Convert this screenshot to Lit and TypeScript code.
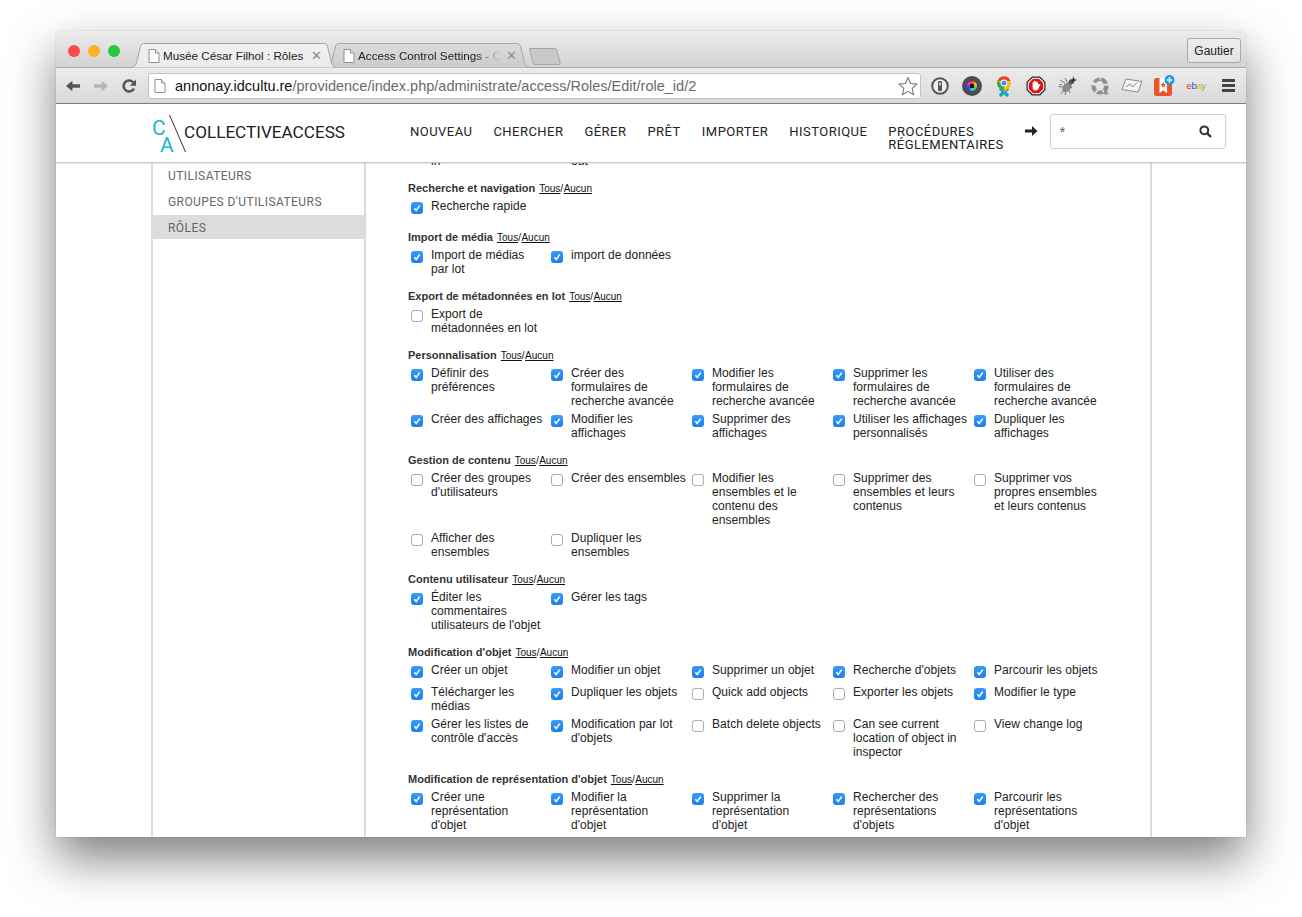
import { LitElement, html, css } from "lit";
import { customElement } from "lit/decorators.js";

type Item = [string, boolean];
interface Section { title: string; items: Item[] }

const on = (...l: string[]): Item[] => l.map((s) => [s, true]);
const off = (...l: string[]): Item[] => l.map((s) => [s, false]);

const SECTIONS: Section[] = [
  { title: "Recherche et navigation", items: on("Recherche rapide") },
  { title: "Import de média", items: on("Import de médias\npar lot", "import de données") },
  { title: "Export de métadonnées en lot", items: off("Export de\nmétadonnées en lot") },
  {
    title: "Personnalisation",
    items: on(
      "Définir des\npréférences",
      "Créer des\nformulaires de\nrecherche avancée",
      "Modifier les\nformulaires de\nrecherche avancée",
      "Supprimer les\nformulaires de\nrecherche avancée",
      "Utiliser des\nformulaires de\nrecherche avancée",
      "Créer des affichages",
      "Modifier les\naffichages",
      "Supprimer des\naffichages",
      "Utiliser les affichages\npersonnalisés",
      "Dupliquer les\naffichages"
    ),
  },
  {
    title: "Gestion de contenu",
    items: off(
      "Créer des groupes\nd'utilisateurs",
      "Créer des ensembles",
      "Modifier les\nensembles et le\ncontenu des\nensembles",
      "Supprimer des\nensembles et leurs\ncontenus",
      "Supprimer vos\npropres ensembles\net leurs contenus",
      "Afficher des\nensembles",
      "Dupliquer les\nensembles"
    ),
  },
  {
    title: "Contenu utilisateur",
    items: on("Éditer les\ncommentaires\nutilisateurs de l'objet", "Gérer les tags"),
  },
  {
    title: "Modification d'objet",
    items: [
      ...on("Créer un objet", "Modifier un objet", "Supprimer un objet", "Recherche d'objets", "Parcourir les objets", "Télécharger les\nmédias", "Dupliquer les objets"),
      ...off("Quick add objects", "Exporter les objets"),
      ...on("Modifier le type", "Gérer les listes de\ncontrôle d'accès", "Modification par lot\nd'objets"),
      ...off("Batch delete objects", "Can see current\nlocation of object in\ninspector", "View change log"),
    ],
  },
  {
    title: "Modification de représentation d'objet",
    items: on(
      "Créer une\nreprésentation\nd'objet",
      "Modifier la\nreprésentation\nd'objet",
      "Supprimer la\nreprésentation\nd'objet",
      "Rechercher des\nreprésentations\nd'objets",
      "Parcourir les\nreprésentations\nd'objet"
    ),
  },
];

const NAV = ["Nouveau", "Chercher", "Gérer", "Prêt", "Importer", "Historique"];
const SIDE = ["Utilisateurs", "Groupes d'utilisateurs", "Rôles"];

const pageIcon = html`<svg class="page" width="12" height="14" viewBox="0 0 12 14"><path d="M1 .5h6.5L11 4v9.500H1z" fill="#fff" stroke="#8f8f8f"/><path d="M7.500.5V4H11" fill="#eee" stroke="#8f8f8f"/></svg>`;

const tabPath = "M0 24.500C3 24.500 4.500 23 5.500 20L9.500 3.500C10 1 11.500 .5 14 .5H192C194.500 .5 196 1 196.500 3.500L200.500 20C201.500 23 203 24.500 206 24.500";

@customElement("app-root")
export class AppRoot extends LitElement {
  static styles = css`
    :host { display: block; width: 1302px; height: 917px; background: #fff; overflow: hidden; font-family: "Liberation Sans", Arial, sans-serif; }
    .shell { padding: 31px 56px 0; }
    .window { position: relative; width: 1190px; height: 806px; border-radius: 5px 5px 0 0; overflow: hidden; background: #fff; display: flex; flex-direction: column; }
    .shadow { border-radius: 5px 5px 0 0; box-shadow: 0 22px 48px rgba(0,0,0,.5), 0 0 1px rgba(0,0,0,.45); width: 1190px; height: 806px; }

    .titlebar { height: 37px; flex: none; box-sizing: border-box; padding: 12px 5px 0 75px; display: flex; align-items: flex-start; background: linear-gradient(#ececec, #d3d3d3); border-bottom: 1px solid #a9a9a9; position: relative; }
    .lights { position: absolute; left: 12px; top: 14px; display: flex; gap: 8px; }
    .light { width: 12px; height: 12px; border-radius: 50%; }
    .red { background: #fc4a46; } .amber { background: #fdb225; } .green { background: #29c83f; }

    .tab { position: relative; width: 206px; height: 25px; flex: none; font-size: 11.7px; color: #222; }
    .tab svg.shape { position: absolute; inset: 0; }
    .tab .inner { position: absolute; inset: 0; display: flex; align-items: center; }
    .tab.active { z-index: 2; margin-right: -11px; }
    .tab.active .inner { padding-left: 17px; }
    .tab.back { width: 204px; }
    .tab.back .inner { padding-left: 17px; }
    .page { flex: none; margin-right: 3px; }
    .tab .title { white-space: nowrap; overflow: hidden; }
    .tab.active .title { width: 141px; }
    .tab.back .title { width: 143px; -webkit-mask-image: linear-gradient(90deg, #000 82%, transparent 100%); mask-image: linear-gradient(90deg, #000 82%, transparent 100%); }
    .close { color: #8a8a8a; font-size: 13px; line-height: 1; margin-left: 7px; }
    .tab.back .close { margin-left: 5px; }
    .newtab { margin: 5px 0 0 -1px; flex: none; }
    .profile { margin-left: auto; margin-top: -5px; height: 25px; width: 54px; box-sizing: border-box; border: 1px solid #a8a8a8; border-radius: 3px; font-size: 12px; color: #222; background: linear-gradient(#ededed, #e4e4e4); display: flex; align-items: center; justify-content: center; }

    .toolbar { height: 36px; flex: none; box-sizing: border-box; display: flex; align-items: center; padding: 0 0 0 9px; background: linear-gradient(#ececec, #d9d9d9); border-bottom: 1px solid #7f7f7f; }
    .nav-btn { width: 16px; height: 16px; flex: none; margin-right: 12px; }
    .omni { width: 773px; height: 26px; margin-left: 11px; box-sizing: border-box; background: #fff; border: 1px solid #c2c2c2; border-radius: 3px; display: flex; align-items: center; padding: 0 2px 0 5px; font-size: 14.5px; color: #6a6a6a; flex: none; }
    .omni .page { margin-right: 9px; }
    .omni b { font-weight: 400; color: #111; }
    .omni .star { margin-left: auto; }
    .ext { display: flex; align-items: center; margin-left: 3px; }
    .ext > * { flex: none; }
    .slot { width: 32px; height: 20px; display: flex; align-items: center; justify-content: center; position: relative; }
    .lens { width: 20px; height: 20px; border-radius: 50%; background: #494c55; display: flex; align-items: center; justify-content: center; }
    .lens i { display: block; width: 10px; height: 10px; border-radius: 50%; background: radial-gradient(#111 30%, transparent 32%), conic-gradient(#f33, #fc0, #3d3, #3cf, #33f, #e3e, #f33); }
    .ebay { font-size: 9.5px; font-weight: 400; letter-spacing: -.4px; font-family: "Liberation Sans", sans-serif; }
    .ebay .e { color: #e53238; } .ebay .b { color: #0064d2; } .ebay .a { color: #f5af02; } .ebay .y { color: #86b817; }

    .header { height: 59px; flex: none; box-sizing: border-box; display: flex; align-items: flex-start; background: #fff; position: relative; z-index: 3; border-bottom: 1px solid #c6c6c6; box-shadow: 0 1px 1px rgba(0,0,0,.08); padding-left: 96px; }
    .logo { flex: none; margin-top: 10px; overflow: visible; }
    .nav { display: flex; gap: 21px; margin: 21px 0 0 64px; font-family: Roboto, "Liberation Sans", sans-serif; font-size: 13px; letter-spacing: .47px; line-height: 13px; color: #222; text-transform: uppercase; }
    .arrow { margin: 21px 0 0 21px; flex: none; }
    .search { width: 176px; height: 35px; box-sizing: border-box; margin: 10px 0 0 12px; border: 1px solid #d0d0d0; border-radius: 3px; flex: none; display: flex; align-items: center; justify-content: space-between; padding: 0 13px 0 9px; color: #5f5550; font-size: 14px; }

    .view { flex: 1; min-height: 0; overflow: hidden; padding-left: 95px; }
    .frame { width: 1001px; height: 100%; box-sizing: border-box; display: flex; border-left: 2px solid #dcdcdc; border-right: 2px solid #dcdcdc; }
    .side { width: 211px; flex: none; box-sizing: border-box; }
    .side div { height: 24px; box-sizing: border-box; margin-bottom: 2px; padding: 2px 0 0 15px; display: flex; align-items: center; font-family: Roboto, "Liberation Sans", sans-serif; font-size: 12px; letter-spacing: .43px; color: #666; text-transform: uppercase; }
    .side div.sel { background: #dcdcdc; }
    .main { flex: 1; border-left: 2px solid #dcdcdc; padding-left: 42px; margin-top: 0; min-width: 0; }
    .scroll { margin-top: -23px; }
    .section { padding-top: 13px; }
    .head { height: 14px; line-height: 14px; margin-bottom: 4px; font-size: 11px; font-weight: 700; color: #333; white-space: nowrap; }
    .head a { font-size: 10px; font-weight: 400; color: #111; text-decoration: underline; }
    .head a.all { margin-left: 1px; }
    .head a.sep { text-decoration: none; margin-right: .5px; }
    .grid { display: grid; grid-template-columns: 140px 141px 141px 141px 141px; row-gap: 4px; align-items: start; }
    .cell { display: flex; min-height: 18px; }
    .box { width: 12px; height: 12px; margin: 3px 8px 0 3px; box-sizing: border-box; border-radius: 3px; flex: none; display: block; }
    .box.yes { background: linear-gradient(#3a9bfc, #1a7ff0); }
    .box.no { background: #fff; border: 1px solid #ababab; }
    .box svg { display: block; }
    .label { font-size: 12px; line-height: 14px; letter-spacing: .04px; color: #222; white-space: pre; }
  `;

  private cell(item: Item) {
    return html`<div class="cell">
      <span class="box ${item[1] ? "yes" : "no"}">${item[1]
        ? html`<svg width="12" height="12" viewBox="0 0 12 12"><path d="M3.400 6.200 5.200 8.400 8.700 3.600" fill="none" stroke="#fff" stroke-width="1.600"/></svg>`
        : ""}</span>
      <span class="label">${item[0]}</span>
    </div>`;
  }

  render() {
    return html`<div class="shell"><div class="shadow"><div class="window">
      <div class="titlebar">
        <div class="lights"><span class="light red"></span><span class="light amber"></span><span class="light green"></span></div>
        <div class="tab active">
          <svg class="shape" width="206" height="25" viewBox="0 0 206 25"><defs><linearGradient id="ta" x1="0" y1="0" x2="0" y2="1"><stop offset="0" stop-color="#f1f1f1"/><stop offset="1" stop-color="#ebebeb"/></linearGradient></defs><path d="${tabPath}" fill="url(#ta)" stroke="#a5a5a5"/></svg>
          <div class="inner">${pageIcon}<span class="title">Musée César Filhol : Rôles</span><span class="close">✕</span></div>
        </div>
        <div class="tab back">
          <svg class="shape" width="204" height="25" viewBox="0 0 206 25" preserveAspectRatio="none"><defs><linearGradient id="tb" x1="0" y1="0" x2="0" y2="1"><stop offset="0" stop-color="#dcdcdc"/><stop offset="1" stop-color="#cbcbcb"/></linearGradient></defs><path d="${tabPath}" fill="url(#tb)" stroke="#a5a5a5"/></svg>
          <div class="inner">${pageIcon}<span class="title">Access Control Settings - Collective</span><span class="close">✕</span></div>
        </div>
        <svg class="newtab" width="32" height="17" viewBox="0 0 32 17"><path d="M1 .5H25C27 .5 27.500 1 28 3L31 14C31.500 16 30.500 16.500 29 16.500H7C5 16.500 4.500 16 4 14L.5 2C.3 1 .5 .5 1 .5Z" fill="#c9c9c9" stroke="#a5a5a5"/></svg>
        <div class="profile">Gautier</div>
      </div>

      <div class="toolbar">
        <svg class="nav-btn" viewBox="0 0 16 16"><path d="M15 6.300H7.400V2.800L1 8l6.400 5.200V9.700H15z" fill="#555"/></svg>
        <svg class="nav-btn" viewBox="0 0 16 16"><path d="M1 6.300H8.600V2.800L15 8l-6.400 5.200V9.700H1z" fill="#b5b5b5"/></svg>
        <svg class="nav-btn" viewBox="0 0 16 16" style="margin-right:0"><path d="M13 10.500A5.500 5.500 0 1 1 12.200 4.300" fill="none" stroke="#555" stroke-width="2.600"/><path d="M15 1.500V7.800H8.800z" fill="#555"/></svg>
        <div class="omni">
          ${pageIcon}<span><b>annonay.idcultu.re</b>/providence/index.php/administrate/access/Roles/Edit/role_id/2</span>
          <svg class="star" width="20" height="20" viewBox="0 0 20 20"><path d="M10 1.500 12.600 7.500 19 8.100 14.200 12.400 15.600 18.700 10 15.400 4.400 18.700 5.800 12.400 1 8.100 7.400 7.500Z" fill="#fff" stroke="#777" stroke-width="1.100" stroke-linejoin="round"/></svg>
        </div>
        <div class="ext">
          <span class="slot"><svg width="18" height="18" viewBox="0 0 18 18"><circle cx="9" cy="9" r="7.800" fill="#eee" stroke="#555" stroke-width="2"/><rect x="7" y="4" width="4" height="10" rx="1" fill="#555"/><rect x="8.200" y="5.500" width="1.600" height="3" fill="#eee"/></svg></span>
          <span class="slot"><span class="lens"><i></i></span></span>
          <span class="slot"><svg width="16" height="22" viewBox="0 0 16 22"><path d="M4 13 12 21M12 13 4 21" stroke="#1aa3c9" stroke-width="3.400"/><path d="M8 1A7 7 0 0 0 3.200 13L8 17l4.800-4A7 7 0 0 0 8 1Z" fill="#fbbc05"/><path d="M1.500 6A7 7 0 0 1 14.500 6L8 6Z" fill="#ea4335"/><path d="M1.300 6A7 7 0 0 0 3.200 13L8 17 8 10Z" fill="#34a853"/><circle cx="8" cy="8" r="3.400" fill="#fff"/><circle cx="8" cy="8" r="2.500" fill="#4a8af4"/></svg></span>
          <span class="slot"><svg width="20" height="20" viewBox="0 0 20 20"><path d="M6 .5H14L19.500 6V14L14 19.500H6L.5 14V6Z" fill="#222"/><path d="M6.500 1.700H13.500L18.300 6.500V13.500L13.500 18.300H6.500L1.700 13.500V6.500Z" fill="#fff"/><path d="M7 2.800H13L17.200 7V13L13 17.200H7L2.800 13V7Z" fill="#e1141c"/><path d="M6.600 9V6.500C6.600 5.500 7.900 5.500 7.900 6.500V5.400C7.900 4.400 9.300 4.400 9.300 5.400V5.800C9.300 4.900 10.700 4.900 10.700 5.800V6.500C10.700 5.700 12 5.700 12 6.500V8.800L13.300 8C14 7.600 14.600 8.300 14.200 9L12.500 12.500C12 13.700 11 14.500 9.500 14.500 7.800 14.500 6.600 13.400 6.600 11.500Z" fill="#fff"/></svg></span>
          <span class="slot"><svg width="22" height="22" viewBox="0 0 22 22"><ellipse cx="10" cy="12" rx="3.800" ry="5.800" transform="rotate(40 10 12)" fill="#8a8a8a"/><circle cx="14" cy="7" r="2.400" fill="#555"/><path d="M8 8 3 5M6 12 1.500 11.500M7 15.500 3.500 19M12 11 15 13M11 13.500 13 18M10 7 8 3M5 9l-3 1M9 16l-1 4" stroke="#777" stroke-width="1" fill="none"/><path d="M16.500 1 17.300 4 20 5 17.300 6 16.500 9 15.500 6 13 5 15.500 4Z" fill="#333"/></svg></span>
          <span class="slot"><svg width="20" height="20" viewBox="0 0 20 20"><g fill="#8f8f8f"><path d="M3 5.500A8.500 8.500 0 0 1 9 1.500L11 5A5 5 0 0 0 6 7Z"/><path d="M11 1.500A8.500 8.500 0 0 1 18 7.500L13.500 8A5 5 0 0 0 11 5Z"/><path d="M18.500 9.500A8.500 8.500 0 0 1 15 17L13 12.500A5 5 0 0 0 14.500 9.500Z"/><path d="M13.500 17.800A8.500 8.500 0 0 1 6 17.500L8.500 14.500A5 5 0 0 0 12 14Z"/><path d="M4.500 16.500A8.500 8.500 0 0 1 1.500 9L5.500 10A5 5 0 0 0 7 13.500Z"/></g><path d="M12.500 18 18.500 18.500 16.500 13.500Z" fill="#8f8f8f"/></svg></span>
          <span class="slot"><svg width="22" height="18" viewBox="0 0 22 18"><path d="M5 2 21 4.500 17 15 1 12.500Z" fill="#f4f4f4" stroke="#8a8a8a"/><path d="M5 10 9 7 11.500 10 16 5.500" fill="none" stroke="#888"/></svg></span>
          <span class="slot"><svg width="22" height="22" viewBox="0 0 22 22"><rect x="1" y="3" width="18" height="18" rx="2.500" fill="#e8562a"/><path d="M6.500 3H14V18L10.200 15.300 6.500 18Z" fill="#fff"/><path d="M10.200 6.500 11.100 9 13 9.100 11.500 10.400 12 12.500 10.200 11.400 8.500 12.500 9 10.400 7.500 9.100 9.400 9Z" fill="#e8562a"/><circle cx="16.500" cy="5" r="5" fill="#1c9bea"/><path d="M13.800 5H19.200M16.500 2.300V7.700" stroke="#fff" stroke-width="1.500"/></svg></span>
          <span class="slot"><span class="ebay"><span class="e">e</span><span class="b">b</span><span class="a">a</span><span class="y">y</span></span></span>
          <span class="slot"><svg width="13" height="13" viewBox="0 0 13 13"><path d="M0 0H13V3H0ZM0 5H13V8H0ZM0 10H13V13H0Z" fill="#444"/></svg></span>
        </div>
      </div>

      <div class="header">
        <svg class="logo" width="194" height="40" viewBox="0 0 194 40">
          <text x="0" y="21" font-family="Roboto, sans-serif" font-weight="400" font-size="21" fill="#12b9cf">C</text>
          <text x="8" y="38" font-family="Roboto, sans-serif" font-weight="400" font-size="21" fill="#12b9cf">A</text>
          <path d="M17.500 1 33.500 38" stroke="#333" stroke-width="1" fill="none"/>
          <text x="32" y="24" font-family="Roboto, sans-serif" font-size="17" textLength="161" lengthAdjust="spacingAndGlyphs" fill="#222">COLLECTIVEACCESS</text>
        </svg>
        <div class="nav">
          ${NAV.map((n) => html`<span>${n}</span>`)}
          <span>Procédures<br />Réglementaires</span>
        </div>
        <svg class="arrow" width="13" height="12" viewBox="0 0 13 12"><path d="M0 4.500H7V1L12.500 6 7 11V7.500H0Z" fill="#222"/></svg>
        <div class="search"><span>*</span><svg width="13" height="13" viewBox="0 0 13 13"><circle cx="5.300" cy="5.300" r="3.900" fill="none" stroke="#333" stroke-width="2"/><path d="M8.300 8.300 12 12" stroke="#333" stroke-width="2.400"/></svg></div>
      </div>

      <div class="view"><div class="frame">
        <div class="side">${SIDE.map((s, i) => html`<div class=${i === 2 ? "sel" : ""}>${s}</div>`)}</div>
        <div class="main"><div class="scroll">
          <div class="grid">${([["Se connecter\nin", true], ["Se déconnecter\nout", true]] as Item[]).map((i) => this.cell(i))}</div>
          ${SECTIONS.map(
            (s) => html`<div class="section">
              <div class="head">${s.title} <a class="all">Tous</a><a class="sep">/</a><a>Aucun</a></div>
              <div class="grid">${s.items.map((i) => this.cell(i))}</div>
            </div>`
          )}
        </div></div>
      </div></div>
    </div></div></div>`;
  }
}
